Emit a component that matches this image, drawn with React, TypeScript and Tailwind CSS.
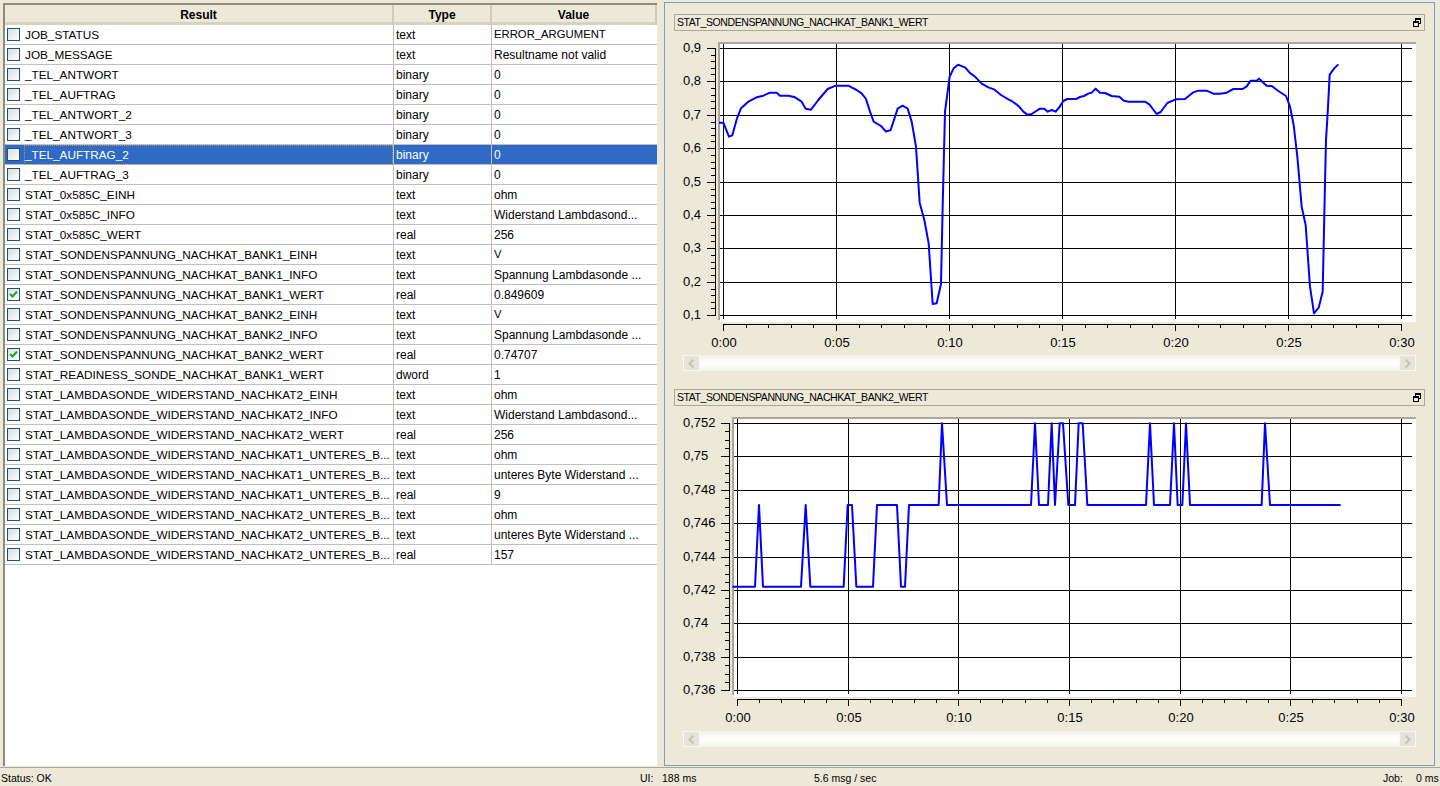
import { Fragment } from "react";

const rows: [string, string, string, boolean?][] = [
  ["JOB_STATUS", "text", "ERROR_ARGUMENT"],
  ["JOB_MESSAGE", "text", "Resultname not valid"],
  ["_TEL_ANTWORT", "binary", "0"],
  ["_TEL_AUFTRAG", "binary", "0"],
  ["_TEL_ANTWORT_2", "binary", "0"],
  ["_TEL_ANTWORT_3", "binary", "0"],
  ["_TEL_AUFTRAG_2", "binary", "0"],
  ["_TEL_AUFTRAG_3", "binary", "0"],
  ["STAT_0x585C_EINH", "text", "ohm"],
  ["STAT_0x585C_INFO", "text", "Widerstand Lambdasond..."],
  ["STAT_0x585C_WERT", "real", "256"],
  ["STAT_SONDENSPANNUNG_NACHKAT_BANK1_EINH", "text", "V"],
  ["STAT_SONDENSPANNUNG_NACHKAT_BANK1_INFO", "text", "Spannung Lambdasonde ..."],
  ["STAT_SONDENSPANNUNG_NACHKAT_BANK1_WERT", "real", "0.849609", true],
  ["STAT_SONDENSPANNUNG_NACHKAT_BANK2_EINH", "text", "V"],
  ["STAT_SONDENSPANNUNG_NACHKAT_BANK2_INFO", "text", "Spannung Lambdasonde ..."],
  ["STAT_SONDENSPANNUNG_NACHKAT_BANK2_WERT", "real", "0.74707", true],
  ["STAT_READINESS_SONDE_NACHKAT_BANK1_WERT", "dword", "1"],
  ["STAT_LAMBDASONDE_WIDERSTAND_NACHKAT2_EINH", "text", "ohm"],
  ["STAT_LAMBDASONDE_WIDERSTAND_NACHKAT2_INFO", "text", "Widerstand Lambdasond..."],
  ["STAT_LAMBDASONDE_WIDERSTAND_NACHKAT2_WERT", "real", "256"],
  ["STAT_LAMBDASONDE_WIDERSTAND_NACHKAT1_UNTERES_B...", "text", "ohm"],
  ["STAT_LAMBDASONDE_WIDERSTAND_NACHKAT1_UNTERES_B...", "text", "unteres Byte Widerstand ..."],
  ["STAT_LAMBDASONDE_WIDERSTAND_NACHKAT1_UNTERES_B...", "real", "9"],
  ["STAT_LAMBDASONDE_WIDERSTAND_NACHKAT2_UNTERES_B...", "text", "ohm"],
  ["STAT_LAMBDASONDE_WIDERSTAND_NACHKAT2_UNTERES_B...", "text", "unteres Byte Widerstand ..."],
  ["STAT_LAMBDASONDE_WIDERSTAND_NACHKAT2_UNTERES_B...", "real", "157"],
];

const SELECTED = 6;

// traced from the picture at 3x, first two numbers are offset of the crop
const trace = (ox: number, oy: number, pts: number[][]) =>
  pts.map(([x, y]) => `${ox + x / 3},${oy + y / 3}`).join(" ");

const curve1 =
  trace(715, 40, [
    [12, 248], [25, 248], [42, 290], [52, 286], [66, 235], [78, 205], [100, 185], [125, 172], [145, 167], [165, 158],
    [185, 158], [195, 167], [220, 167], [240, 172], [260, 185], [272, 206], [288, 209], [310, 180], [338, 147], [362, 137],
    [400, 137], [425, 150], [440, 160], [453, 177], [465, 215], [476, 245], [498, 258], [513, 275], [527, 270], [548, 206],
    [563, 197], [578, 206], [590, 245], [603, 320], [614, 488], [628, 540], [641, 610], [653, 792], [665, 790], [678, 732],
    [683, 500], [690, 215], [704, 110], [716, 85], [729, 74], [751, 83], [765, 99], [780, 110], [800, 131], [820, 142],
    [837, 148], [858, 165], [880, 178], [890, 183], [912, 199], [925, 215], [937, 224], [950, 222], [975, 206], [988, 206],
    [998, 215], [1010, 210], [1022, 215], [1036, 198],
  ]) +
  " " +
  trace(1060, 40, [
    [0, 198], [10, 183], [22, 177], [48, 177], [60, 171], [72, 168], [85, 161], [95, 158], [107, 146], [120, 158],
    [135, 159], [155, 168], [178, 170], [192, 182], [205, 185], [255, 185], [268, 193], [290, 222], [302, 216], [322, 189],
    [347, 178], [375, 177], [400, 157], [415, 152], [440, 152], [460, 161], [480, 161], [500, 158], [520, 147], [548, 147],
    [560, 139], [572, 122], [590, 122], [597, 116], [620, 137], [635, 138], [655, 153], [678, 168], [690, 200], [701, 255],
    [712, 350], [725, 500], [737, 555], [750, 740], [762, 820], [776, 803], [788, 755], [795, 430], [798, 300], [803, 220],
    [809, 104], [822, 86], [835, 73],
  ]);

const L = 530, M = 285, H = 40;
const curve2 =
  trace(725, 410, [
    [22, L], [90, L], [102, M], [114, L], [228, L], [242, M], [256, L], [356, L], [368, M], [381, M],
    [394, L], [444, L], [456, M], [516, M], [528, L], [540, L], [552, M], [641, M], [651, H], [666, M],
    [918, M], [930, H], [942, M], [969, M], [980, H], [990, M], [1004, H], [1014, H],
  ]) +
  " " +
  trace(1020, 410, [
    [145, M], [165, M], [176, H], [188, H], [202, M], [378, M], [390, H], [402, M], [450, M], [462, H],
    [473, M], [487, M], [498, H], [510, M], [725, M], [735, H], [750, M], [962, M],
  ]);

type ChartProps = {
  top: number;
  height: number;
  plotLeft: number;
  plotTop: number;
  plotBottom: number;
  vLines: number[];
  hLines: number[];
  yLabels: string[];
  yMinors: number;
  axisY: number;
  labelY: number;
  curve: string;
};

function Plot({ top, height, plotLeft, plotTop, plotBottom, vLines, hLines, yLabels, yMinors, axisY, labelY, curve }: ChartProps) {
  const axisX = plotLeft - 5;
  const xLabels = ["0:00", "0:05", "0:10", "0:15", "0:20", "0:25", "0:30"];
  return (
    <svg width="751" height={height} viewBox={`674 ${top} 751 ${height}`} className="block">
      <rect x={plotLeft} y={plotTop} width={1416 - plotLeft} height={plotBottom - plotTop} fill="#fff" />
      <g shapeRendering="crispEdges">
        <rect x={plotLeft - 2} y={plotTop - 2} width={1418 - plotLeft} height="2" fill="#aca899" />
        <rect x={plotLeft - 2} y={plotTop} width="2" height={plotBottom - plotTop - 2} fill="#aca899" />
        {vLines.map((x) => (
          <rect key={x} x={x} y={plotTop} width="1" height={plotBottom - plotTop - 3} fill="#000" />
        ))}
        {hLines.map((y) => (
          <rect key={y} x={plotLeft} y={y} width={1412 - plotLeft} height="1" fill="#000" />
        ))}
        {/* y axis */}
        <rect x={axisX} y={hLines[0]} width="1" height={hLines[8] - hLines[0] + 1} fill="#000" />
        {hLines.map((y, i) => (
          <Fragment key={y}>
            <rect x={axisX - 8} y={y} width="8" height="1" fill="#000" />
            {i < 8 &&
              Array.from({ length: yMinors }, (_, k) => (
                <rect
                  key={k}
                  x={axisX - 4}
                  y={Math.round(y + ((hLines[i + 1] - y) * (k + 1)) / (yMinors + 1))}
                  width="4"
                  height="1"
                  fill="#000"
                />
              ))}
          </Fragment>
        ))}
        {/* x axis */}
        <rect x={vLines[0]} y={axisY} width={vLines[6] - vLines[0] + 1} height="1" fill="#000" />
        {vLines.map((x, i) => (
          <Fragment key={x}>
            <rect x={x} y={axisY} width="1" height="7" fill="#000" />
            {i < 6 &&
              [1, 2, 3, 4].map((k) => (
                <rect
                  key={k}
                  x={Math.round(x + ((vLines[i + 1] - x) * k) / 5)}
                  y={axisY}
                  width="1"
                  height="4"
                  fill="#000"
                />
              ))}
          </Fragment>
        ))}
      </g>
      <polyline points={curve} fill="none" stroke="#0000ff" strokeWidth="2" strokeLinejoin="round" />
      {yLabels.map((t, i) => (
        <text key={t} x="683" y={hLines[i] + 4} fontSize="13" fill="#000">
          {t}
        </text>
      ))}
      {xLabels.map((t, i) => (
        <text key={t} x={vLines[i] + 1} y={labelY} fontSize="13" fill="#000" textAnchor="middle">
          {t}
        </text>
      ))}
    </svg>
  );
}

function ChartHeader({ title }: { title: string }) {
  return (
    <div className="flex h-[17px] w-[751px] items-center justify-between border border-[#aca899] pl-[2px] pr-[2px] text-[10.5px] leading-none tracking-[-0.42px]">
      <span>{title}</span>
      <svg width="10" height="10" viewBox="0 0 10 10" shapeRendering="crispEdges">
        <path d="M3 0h6v6H7V5h1V2H4v1H3z" fill="#000" />
        <path d="M1 3h6v6H1zM2 5v3h4V5z" fill="#000" fillRule="evenodd" />
      </svg>
    </div>
  );
}

function ScrollBar() {
  const btn =
    "flex h-[16px] w-[17px] items-center justify-center border border-[#f8f7f2] bg-[#e6e4d8]";
  return (
    <div className="ml-[9px] flex h-[16px] w-[733px] justify-between bg-gradient-to-b from-[#f1efe5] via-white to-[#f3f2ea]">
      <div className={btn}>
        <svg width="7" height="9" viewBox="0 0 7 9">
          <path d="M5.5 0.5L1.5 4.5L5.5 8.5" fill="none" stroke="#c5c3b6" strokeWidth="2" />
        </svg>
      </div>
      <div className={btn}>
        <svg width="7" height="9" viewBox="0 0 7 9">
          <path d="M1.5 0.5L5.5 4.5L1.5 8.5" fill="none" stroke="#c5c3b6" strokeWidth="2" />
        </svg>
      </div>
    </div>
  );
}

function Check({ checked }: { checked?: boolean }) {
  return (
    <span className="flex h-[13px] w-[13px] shrink-0 items-center justify-center border border-[#1c5180] bg-gradient-to-br from-[#dcdcd7] to-white">
      {checked && (
        <svg width="9" height="9" viewBox="0 0 9 9">
          <path d="M1 4L3.5 6.5L8 1.5" fill="none" stroke="#21a121" strokeWidth="2" />
        </svg>
      )}
    </span>
  );
}

const vs1 = [723, 836, 949, 1062, 1175, 1288, 1401];
const hs1 = [48, 81, 115, 148, 182, 215, 248, 282, 315];
const vs2 = [737, 848, 958, 1069, 1180, 1290, 1401];
const hs2 = [423, 456, 490, 523, 557, 590, 623, 657, 690];

export default function App() {
  return (
    <div className="flex h-[786px] w-[1440px] flex-col overflow-hidden bg-[#ece9d8] font-['Liberation_Sans',sans-serif] text-[12px] text-black">
      <div className="flex h-[767px]">
        {/* results table */}
        <div className="ml-[3px] mt-[3px] h-[763px] w-[654px] border-l-2 border-t-2 border-[#8e8b7b] bg-white">
          <div className="grid h-[20px] grid-cols-[389px_98px_165px] border-b-[3px] border-[#d6d2c2] bg-[#ece9d8] font-bold leading-[20px]">
            <div className="border-r-2 border-r-[#cfccbb] text-center">Result</div>
            <div className="border-r-2 border-r-[#cfccbb] text-center">Type</div>
            <div className="border-r-2 border-r-[#cfccbb] text-center">Value</div>
          </div>
          {rows.map(([name, type, value, checked], i) => {
            const sel = i === SELECTED;
            return (
              <div
                key={i}
                className={
                  sel
                    ? "grid h-[20px] grid-cols-[389px_98px_165px] border-b border-[#c0c0c0] bg-[#316ac5] text-white"
                    : "grid h-[20px] grid-cols-[389px_98px_165px] border-b border-[#c0c0c0]"
                }
              >
                <div className="flex items-center border-r border-[#c0c0c0] pl-[2px]">
                  <Check checked={checked} />
                  <span
                    className={
                      sel
                        ? "ml-[4px] flex h-full flex-1 items-center whitespace-nowrap border border-dotted border-[#b89a6a] text-[11.75px]"
                        : "ml-[4px] flex h-full flex-1 items-center whitespace-nowrap border border-transparent text-[11.75px]"
                    }
                  >
                    {name}
                  </span>
                </div>
                <div className="flex items-center border-r border-[#c0c0c0] pl-[2px]">{type}</div>
                <div className={/^[A-Z_]+$/.test(value) ? "flex items-center pl-[2px] text-[11.3px]" : "flex items-center pl-[2px]"}>
                  {value}
                </div>
              </div>
            );
          })}
        </div>

        {/* chart panel */}
        <div className="ml-[7px] mt-[2px] h-[764px] w-[771px] border border-[#7f9db9] pl-[9px] pt-[11px]">
          <ChartHeader title="STAT_SONDENSPANNUNG_NACHKAT_BANK1_WERT" />
          <Plot
            top={31}
            height={324}
            plotLeft={720}
            plotTop={44}
            plotBottom={322}
            vLines={vs1}
            hLines={hs1}
            yLabels={["0,9", "0,8", "0,7", "0,6", "0,5", "0,4", "0,3", "0,2", "0,1"]}
            yMinors={4}
            axisY={324}
            labelY={347}
            curve={curve1}
          />
          <ScrollBar />
          <div className="h-[18px]" />
          <ChartHeader title="STAT_SONDENSPANNUNG_NACHKAT_BANK2_WERT" />
          <Plot
            top={406}
            height={325}
            plotLeft={734}
            plotTop={419}
            plotBottom={697}
            vLines={vs2}
            hLines={hs2}
            yLabels={["0,752", "0,75", "0,748", "0,746", "0,744", "0,742", "0,74", "0,738", "0,736"]}
            yMinors={3}
            axisY={699}
            labelY={722}
            curve={curve2}
          />
          <ScrollBar />
        </div>
      </div>

      {/* status bar */}
      <div className="flex h-[19px] items-center border-t border-[#aca899] pt-[3px] text-[10.5px]">
        <span className="w-[640px] pl-px">Status: OK</span>
        <span className="w-[22px]">UI:</span>
        <span className="w-[152px]">188 ms</span>
        <span className="w-[569px]">5.6 msg / sec</span>
        <span className="w-[33px]">Job:</span>
        <span>0 ms</span>
      </div>
    </div>
  );
}
